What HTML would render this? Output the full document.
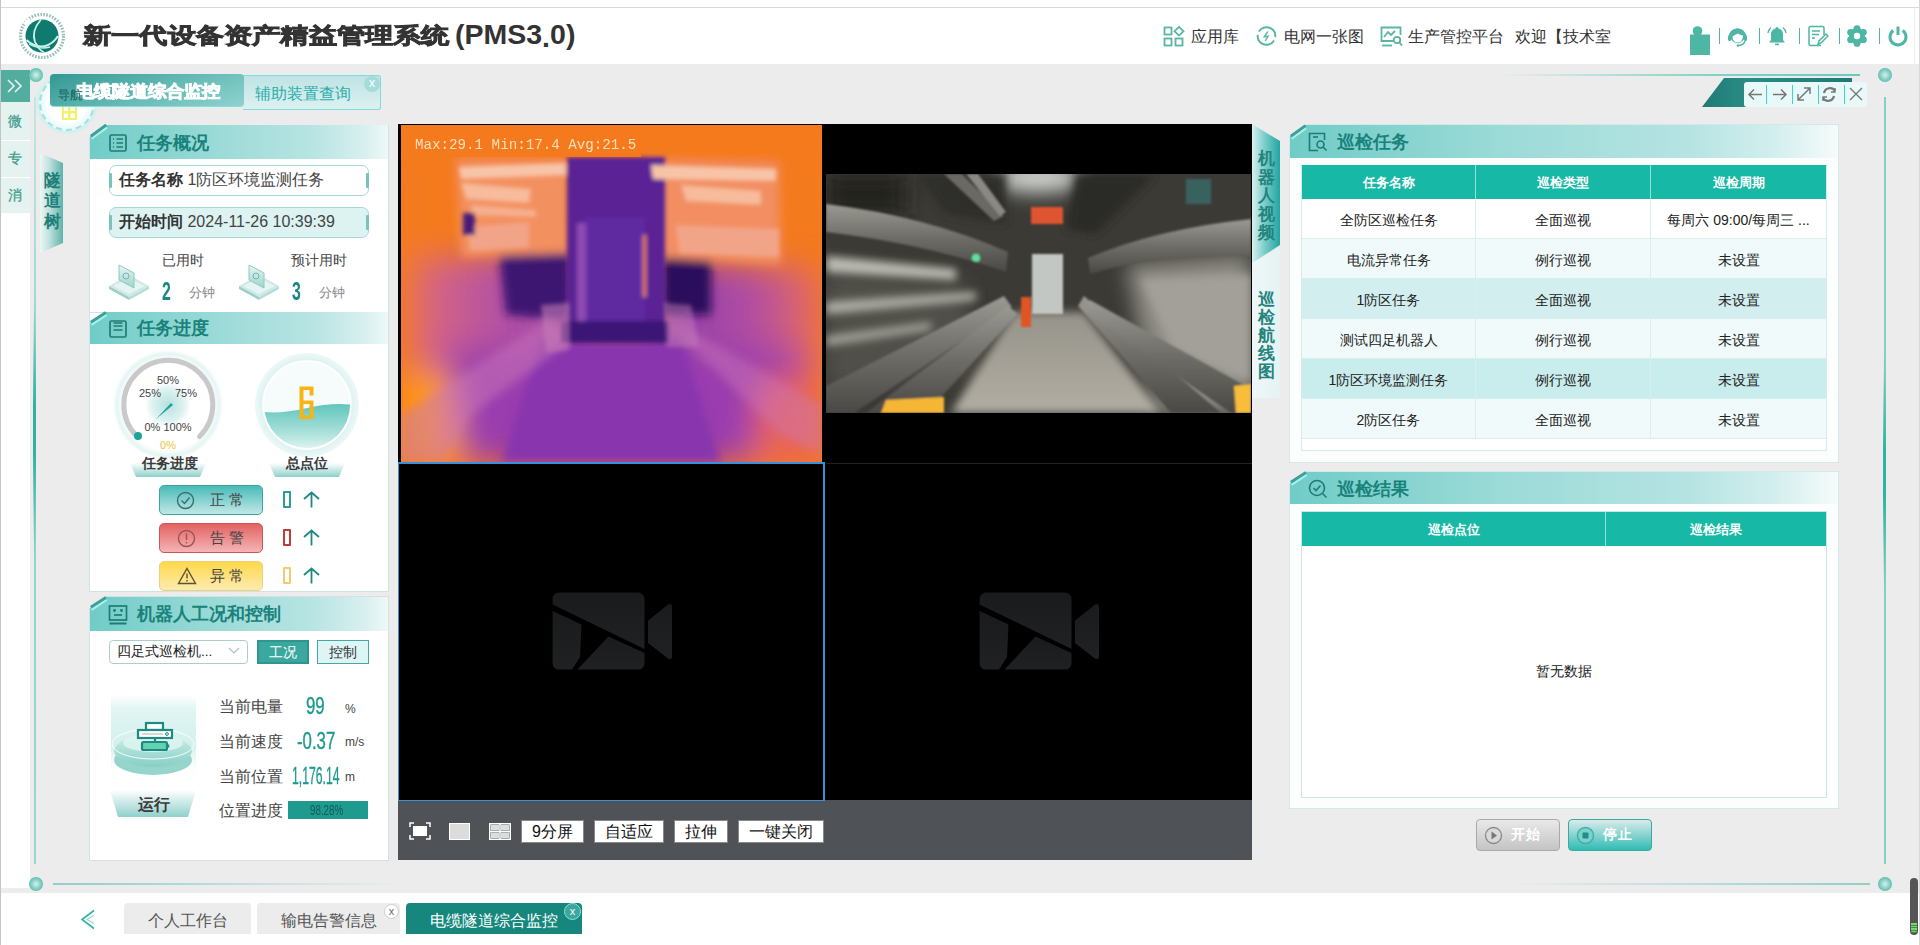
<!DOCTYPE html>
<html><head><meta charset="utf-8">
<style>
*{box-sizing:border-box;margin:0;padding:0}
html,body{width:1920px;height:945px;overflow:hidden;background:#fff;font-family:"Liberation Sans",sans-serif;color:#333}
.a{position:absolute}
.nw{white-space:nowrap}
#main{left:0;top:64px;width:1920px;height:829px;background:#ececec}
.title{left:83px;top:16px;font-size:28px;font-weight:900;color:#333;letter-spacing:0.2px;white-space:nowrap;-webkit-text-stroke:1.1px #333}
.nav{top:27px;font-size:16px;line-height:20px;color:#333;white-space:nowrap}
.sep{top:28px;width:1px;height:16px;background:#4db6a4}
.ph{height:33px;background:linear-gradient(90deg,#70ccc7 0%,#9ddbd8 45%,#b8e4e3 75%,#d8efef 92%,#eef8f8 100%);clip-path:polygon(15px 0,100% 0,100% 100%,0 100%,0 11px)}
.phl{width:20px;height:3px;background:#3d9f97;transform:rotate(-37deg);transform-origin:0 0}
.pht{font-size:18px;font-weight:bold;color:#18827b;line-height:20px;white-space:nowrap}
.cond{font-family:"Liberation Sans Narrow","Liberation Sans",sans-serif;transform:scaleX(0.62);transform-origin:0 0;display:inline-block}
.sbtn{height:30px;width:104px;border-radius:5px;font-size:14px;line-height:28px;color:#444;letter-spacing:6px}
.vid{background:#000}
.vtab{color:#1f7f79;font-size:17px;font-weight:bold;line-height:18.5px;width:20px;text-align:center}
</style></head><body>
<div class="a" id="main"></div>
<div class="a" style="left:0;top:7px;width:1920px;height:1px;background:#d9d9d9"></div>
<div class="a" style="left:1914px;top:8px;width:1px;height:56px;background:#f0f0f0"></div><div class="a" style="left:1919px;top:0;width:1px;height:945px;background:#d8d8d8"></div>
<div class="a" style="left:0;top:0;width:1px;height:945px;background:#c4c4c4"></div>

<!-- ===== HEADER ===== -->
<svg class="a" style="left:17px;top:11px" width="50" height="50" viewBox="0 0 50 50">
 <circle cx="25" cy="25" r="21.5" fill="none" stroke="#3c8a80" stroke-width="3.2" stroke-dasharray="1.6 1.4" opacity="0.55"/>
 <path d="M8 14 A21.5 21.5 0 0 1 13 8" stroke="#fff" stroke-width="4" fill="none"/>
 <circle cx="25" cy="25" r="16.5" fill="#0f7a6e"/>
 <path d="M24 8.5 Q14 20 18 31 Q21 38 27 41.5" stroke="#c8f3ec" stroke-width="1.8" fill="none"/>
 <path d="M9.5 29 Q18 37 28 35 Q36 33 41 25" stroke="#c8f3ec" stroke-width="2" fill="none"/>
 <path d="M12 33 Q22 39 33 36" stroke="#c8f3ec" stroke-width="1.3" fill="none"/>
 <path d="M19 32 L21 35" stroke="#c8f3ec" stroke-width="1.2"/>
</svg>
<div class="a title" style="top:17px;transform:scaleY(0.78);transform-origin:0 50%">新一代设备资产精益管理系统</div>
<div class="a nw" style="left:455px;top:17px;font-size:28.5px;line-height:34px;font-weight:bold;color:#333">(PMS3<span style="position:relative;top:3px">.</span>0)</div>

<svg class="a" style="left:1163px;top:26px" width="22" height="22" viewBox="0 0 22 22" fill="none" stroke="#5bb5a3" stroke-width="1.8">
 <rect x="1.5" y="1.5" width="7" height="7"/><rect x="1.5" y="12.5" width="7" height="7"/><rect x="12.5" y="12.5" width="7" height="7"/><path d="M16 0.8 L20.5 5.2 L16 9.6 L11.5 5.2 Z"/>
</svg>
<div class="a nav" style="left:1191px">应用库</div>
<svg class="a" style="left:1256px;top:26px" width="21" height="21" viewBox="0 0 21 21" fill="none" stroke="#5bb5a3" stroke-width="1.9">
 <circle cx="10.5" cy="10" r="8.8" stroke-dasharray="24 3.6" transform="rotate(-150 10.5 10)"/><path d="M11.8 5.5 L8.3 10.8 L12.2 10.2 L9.2 15" stroke-width="1.4"/>
</svg>
<div class="a nav" style="left:1284px">电网一张图</div>
<svg class="a" style="left:1380px;top:26px" width="24" height="22" viewBox="0 0 24 22" fill="none" stroke="#5bb5a3" stroke-width="1.8">
 <path d="M13 15 H1.5 V1.5 H20.5 V9"/><path d="M4 11 L8 6 L11 9 L15 5"/><circle cx="17" cy="14" r="3.2"/><path d="M19.3 16.3 L22 19.5"/><path d="M2 19.5 H12"/>
</svg>
<div class="a nav" style="left:1408px">生产管控平台</div>
<div class="a nav" style="left:1515px">欢迎【技术室</div>

<svg class="a" style="left:1688px;top:25px" width="24" height="32" viewBox="0 0 24 32">
 <rect x="2" y="9.5" width="20" height="20.5" fill="#4db6a4"/><circle cx="9.5" cy="6" r="4.8" fill="#4db6a4"/>
</svg>
<div class="a sep" style="left:1719px"></div>
<svg class="a" style="left:1727px;top:25px" width="21" height="22" viewBox="0 0 21 22">
 <path d="M2.5 12 A8 8 0 0 1 18.5 12" fill="none" stroke="#4db6a4" stroke-width="1.6"/>
 <circle cx="10.5" cy="11" r="7.2" fill="#4db6a4"/>
 <path d="M5.5 11.5 Q8 9.5 11 8.5 Q13.5 10.5 16 10.5 Q16 17 10.5 17.5 Q5.5 17 5.5 11.5Z" fill="#fff"/>
 <rect x="1" y="10" width="3.2" height="6" rx="1.5" fill="#4db6a4"/><rect x="16.8" y="10" width="3.2" height="6" rx="1.5" fill="#4db6a4"/>
 <path d="M18 16 Q17 20 12 20.5" fill="none" stroke="#4db6a4" stroke-width="1.3"/><circle cx="11" cy="20.5" r="1.3" fill="#4db6a4"/>
</svg>
<div class="a sep" style="left:1759px"></div>
<svg class="a" style="left:1766px;top:25px" width="22" height="22" viewBox="0 0 22 22" fill="#4db6a4">
 <path d="M11 2 A1.5 1.5 0 0 1 12.5 3.5 A6 6 0 0 1 17 9.5 V15 L19 17.5 H3 L5 15 V9.5 A6 6 0 0 1 9.5 3.5 A1.5 1.5 0 0 1 11 2Z"/><rect x="9" y="18.5" width="4" height="1.8" rx="0.9"/>
 <path d="M2 8 Q2.5 4.5 5 2.5" stroke="#4db6a4" stroke-width="1.3" fill="none"/><path d="M20 8 Q19.5 4.5 17 2.5" stroke="#4db6a4" stroke-width="1.3" fill="none"/>
</svg>
<div class="a sep" style="left:1799px"></div>
<svg class="a" style="left:1807px;top:25px" width="22" height="22" viewBox="0 0 22 22" fill="none" stroke="#4db6a4" stroke-width="1.5">
 <path d="M14 20.5 H3.5 A1.5 1.5 0 0 1 2 19 V3 A1.5 1.5 0 0 1 3.5 1.5 H15.5 A1.5 1.5 0 0 1 17 3 V10"/><path d="M5 6 H13 M5 9.5 H12 M5 13 H8"/><path d="M11 19.5 L12 16 L19 9 L21 11 L14 18 Z"/>
</svg>
<div class="a sep" style="left:1839px"></div>
<svg class="a" style="left:1846px;top:25px" width="22" height="22" viewBox="0 0 22 22">
 <g fill="#4db6a4"><circle cx="11" cy="11" r="8"/>
 <circle cx="11" cy="3.6" r="3.4"/><circle cx="11" cy="18.4" r="3.4"/><circle cx="4.6" cy="7.3" r="3.4"/><circle cx="17.4" cy="7.3" r="3.4"/><circle cx="4.6" cy="14.7" r="3.4"/><circle cx="17.4" cy="14.7" r="3.4"/></g>
 <circle cx="11" cy="11" r="3.2" fill="#fff"/>
</svg>
<div class="a sep" style="left:1879px"></div>
<svg class="a" style="left:1887px;top:25px" width="22" height="22" viewBox="0 0 22 22" fill="none" stroke="#4db6a4" stroke-width="3">
 <path d="M6.3 5.5 A8 8 0 1 0 15.7 5.5"/><path d="M11 1.5 V10"/>
</svg>

<!-- ===== LEFT SIDEBAR ===== -->
<div class="a" style="left:1px;top:213px;width:29px;height:675px;background:#fff"></div>
<div class="a" style="left:1px;top:70px;width:29px;height:32px;background:#51ad9d"></div>
<svg class="a" style="left:7px;top:79px" width="17" height="14" viewBox="0 0 17 14" fill="none" stroke="#e8f6f3" stroke-width="1.6"><path d="M1 1 L7 7 L1 13 M8 1 L14 7 L8 13"/></svg>
<div class="a" style="left:1px;top:102px;width:29px;height:111px;background:#e4f2f0"></div>
<div class="a" style="left:1px;top:140px;width:29px;height:1px;background:#fff"></div>
<div class="a" style="left:1px;top:177px;width:29px;height:1px;background:#fff"></div>
<div class="a nw" style="left:8px;top:113px;font-size:14px;color:#3f9d8c;-webkit-text-stroke:0.3px #3f9d8c">微</div>
<div class="a nw" style="left:8px;top:150px;font-size:14px;color:#3f9d8c;-webkit-text-stroke:0.3px #3f9d8c">专</div>
<div class="a nw" style="left:8px;top:187px;font-size:14px;color:#3f9d8c;-webkit-text-stroke:0.3px #3f9d8c">消</div>

<!-- frame lines -->
<div class="a" style="left:34px;top:97px;width:1.5px;height:767px;background:linear-gradient(180deg,#c5e6e1,#8fd3c9 40%,#9ad6cd)"></div><div class="a" style="left:33px;top:300px;width:3px;height:260px;border-radius:50%;background:linear-gradient(180deg,rgba(47,179,160,0),#2fb3a0 40%,#2fb3a0 60%,rgba(47,179,160,0))"></div>
<div class="a" style="left:1884px;top:97px;width:1.5px;height:767px;background:#86d0c5"></div><div class="a" style="left:1883px;top:350px;width:3px;height:245px;border-radius:50%;background:linear-gradient(180deg,rgba(47,179,160,0),#2fb3a0 40%,#2fb3a0 60%,rgba(47,179,160,0))"></div>
<div class="a" style="left:53px;top:883px;width:350px;height:2px;background:linear-gradient(90deg,#8fcfc6,rgba(190,220,216,0))"></div><div class="a" style="left:1510px;top:883px;width:360px;height:2px;background:linear-gradient(90deg,rgba(190,220,216,0),#8fcfc6)"></div>
<div class="a" style="left:1500px;top:74px;width:360px;height:2px;background:linear-gradient(90deg,rgba(111,201,189,0),#7fd2c4 60%,#6cc9bd)"></div>
<div class="a" style="left:29px;top:68px;width:14px;height:14px;border-radius:50%;background:radial-gradient(circle at 50% 50%,#d6f0ec,#5fbfb1 70%)"></div>
<div class="a" style="left:29px;top:877px;width:14px;height:14px;border-radius:50%;background:radial-gradient(circle at 50% 50%,#d6f0ec,#5fbfb1 70%)"></div>
<div class="a" style="left:1878px;top:68px;width:14px;height:14px;border-radius:50%;background:radial-gradient(circle at 50% 50%,#d6f0ec,#5fbfb1 70%)"></div>
<div class="a" style="left:1878px;top:877px;width:14px;height:14px;border-radius:50%;background:radial-gradient(circle at 50% 50%,#d6f0ec,#5fbfb1 70%)"></div>

<!-- nav circle -->
<div class="a" style="left:39px;top:75px;width:56px;height:56px;border-radius:50%;border:2px dashed #9fe0df;box-shadow:0 0 3px 2px #c8f2f1;background:radial-gradient(circle,#fff 50%,#e0f6f6 80%)"></div>
<div class="a" style="left:62px;top:104px;width:15px;height:16px;border:2.5px solid #f3f06a;background:linear-gradient(#f3f06a,#f3f06a) center/2.5px 100% no-repeat,linear-gradient(#f3f06a,#f3f06a) center/100% 2.5px no-repeat"></div>

<!-- top tabs -->
<div class="a" style="left:243px;top:75px;width:138px;height:35px;background:linear-gradient(180deg,#bfe3e3,#dcf1f1);border:1.5px solid #7fdcd7;border-left:none;border-radius:0 3px 3px 0"></div>
<div class="a nw" style="left:255px;top:84px;font-size:16px;color:#2aaeaa">辅助装置查询</div>
<div class="a" style="left:364px;top:76px;width:16px;height:16px;border-radius:50%;background:#a5dcda;color:#fff;font-size:12px;line-height:15px;text-align:center">x</div>
<div class="a" style="left:50px;top:74px;width:194px;height:33px;border-radius:4px;background:linear-gradient(160deg,#2f9590 0%,#5db7b2 50%,#8dd1cd 100%);border-bottom:1px solid #7fe0dc;opacity:0.97"></div>
<div class="a nw" style="left:76px;top:79px;font-size:18px;font-weight:bold;color:#fff;-webkit-text-stroke:0.9px #fff;transform:scaleY(0.92)">电缆隧道综合监控</div>

<div class="a nw" style="left:58px;top:87px;font-size:12px;font-weight:bold;color:#1f6a66;opacity:0.85">导航</div>
<!-- 隧道树 -->
<div class="a" style="left:40px;top:153px;width:23px;height:100px;background:linear-gradient(90deg,#eef7f6,#bfe2de 40%,#5fb2a8);clip-path:polygon(0 0,100% 10px,100% 90px,0 100%)"></div>
<div class="a vtab" style="left:42px;top:171px;font-size:17px;line-height:20.3px;color:#1d7f78">隧<br>道<br>树</div>

<!-- ===== LEFT PANEL ===== -->
<div class="a" style="left:89px;top:125px;width:300px;height:187px;background:#fff;border:1px solid #cfe3e2;border-bottom:none;clip-path:polygon(16px 0,100% 0,100% 100%,0 100%,0 12px)"></div>
<div class="a" style="left:89px;top:312px;width:300px;height:280px;background:#fff;border:1px solid #cfe3e2"></div>
<div class="a" style="left:89px;top:596px;width:300px;height:265px;background:#fff;border:1px solid #cfe3e2;clip-path:polygon(16px 0,100% 0,100% 100%,0 100%,0 12px)"></div>

<!-- section 1 -->
<div class="a ph" style="left:90px;top:125px;width:298px;height:34px"></div>
<div class="a" style="left:90px;top:135px;width:19px;height:3px;background:#3d9f97;transform:rotate(-36deg);transform-origin:0 0"></div><div class="a" style="left:91px;top:138px;width:19px;height:1.5px;background:#a8f2ee;transform:rotate(-36deg);transform-origin:0 0"></div>
<svg class="a" style="left:109px;top:134px" width="18" height="18" viewBox="0 0 18 18" fill="none" stroke="#1f7b75" stroke-width="1.7"><rect x="1" y="1" width="16" height="16" rx="1.5"/><path d="M4 5 H5 M7.5 5 H14 M4 9 H5 M7.5 9 H14 M4 13 H5 M7.5 13 H14"/></svg>
<div class="a pht" style="left:137px;top:133px">任务概况</div>

<div class="a" style="left:109px;top:165px;width:260px;height:31px;border:1px solid #a7d8d3;border-radius:7px;background:#fff"></div>
<div class="a" style="left:109px;top:173px;width:3px;height:15px;background:#79c3bc;border-radius:1px"></div>
<div class="a" style="left:366px;top:173px;width:3px;height:15px;background:#79c3bc;border-radius:1px"></div>
<div class="a nw" style="left:119px;top:170px;font-size:16px;line-height:20px;color:#333"><b>任务名称</b> <span style="color:#444">1防区环境监测任务</span></div>

<div class="a" style="left:109px;top:207px;width:260px;height:31px;border:1px solid #a7d8d3;border-radius:7px;background:#dcf3f2"></div>
<div class="a" style="left:109px;top:215px;width:3px;height:15px;background:#79c3bc;border-radius:1px"></div>
<div class="a" style="left:366px;top:215px;width:3px;height:15px;background:#79c3bc;border-radius:1px"></div>
<div class="a nw" style="left:119px;top:212px;font-size:16px;line-height:20px;color:#333"><b>开始时间</b> <span style="color:#444">2024-11-26 10:39:39</span></div>

<svg class="a" style="left:108px;top:260px" width="44" height="40" viewBox="0 0 44 40">
 <defs><linearGradient id="ig" x1="0" y1="0" x2="0" y2="1"><stop offset="0" stop-color="#e8f6f5"/><stop offset="1" stop-color="#9fd3cc"/></linearGradient></defs>
 <path d="M1 26 L21 15 L41 26 L21 37 Z" fill="#cfe9e6"/><path d="M1 26 V29 L21 40 V37 Z" fill="#9ccfc8"/><path d="M41 26 V29 L21 40 V37 Z" fill="#b6ddd8"/>
 <path d="M5 26 L21 18 L37 26 L21 34 Z" fill="#e6f5f3"/>
 <path d="M11 5 L26 13 V28 L11 20 Z" fill="url(#ig)" stroke="#8ccac2" stroke-width="1"/><circle cx="18" cy="16" r="3" fill="none" stroke="#6fb8b0" stroke-width="1"/>
</svg>
<div class="a nw" style="left:162px;top:252px;font-size:14px;color:#444">已用时</div>
<div class="a nw" style="left:162px;top:279px;font-size:25.5px;line-height:24px;font-weight:bold;color:#1a8a80"><span class="cond" style="transform:scaleX(0.62)">2</span></div>
<div class="a nw" style="left:189px;top:285px;font-size:12.5px;color:#888">分钟</div>
<svg class="a" style="left:238px;top:260px" width="44" height="40" viewBox="0 0 44 40">
 <path d="M1 26 L21 15 L41 26 L21 37 Z" fill="#cfe9e6"/><path d="M1 26 V29 L21 40 V37 Z" fill="#9ccfc8"/><path d="M41 26 V29 L21 40 V37 Z" fill="#b6ddd8"/>
 <path d="M5 26 L21 18 L37 26 L21 34 Z" fill="#e6f5f3"/>
 <path d="M11 5 L26 13 V28 L11 20 Z" fill="url(#ig)" stroke="#8ccac2" stroke-width="1"/><circle cx="18" cy="16" r="3" fill="none" stroke="#6fb8b0" stroke-width="1"/>
</svg>
<div class="a nw" style="left:291px;top:252px;font-size:14px;color:#444">预计用时</div>
<div class="a nw" style="left:292px;top:279px;font-size:25.5px;line-height:24px;font-weight:bold;color:#1a8a80"><span class="cond" style="transform:scaleX(0.62)">3</span></div>
<div class="a nw" style="left:319px;top:285px;font-size:12.5px;color:#888">分钟</div>

<!-- section 2 -->
<div class="a ph" style="left:90px;top:312px;width:298px;height:32px"></div>
<div class="a" style="left:90px;top:321px;width:18px;height:3px;background:#3d9f97;transform:rotate(-33deg);transform-origin:0 0"></div><div class="a" style="left:91px;top:324px;width:18px;height:1.5px;background:#a8f2ee;transform:rotate(-33deg);transform-origin:0 0"></div>
<svg class="a" style="left:109px;top:320px" width="18" height="18" viewBox="0 0 18 18" fill="none" stroke="#1f7b75" stroke-width="1.7"><rect x="1" y="1" width="16" height="16" rx="1.5"/><path d="M4.5 6 H13.5 M4.5 10 H13.5 M4.5 3 H13.5"/></svg>
<div class="a pht" style="left:137px;top:318px">任务进度</div>

<!-- gauge 1 -->
<svg class="a" style="left:108px;top:345px" width="120" height="135" viewBox="0 0 120 135">
 <defs>
  <radialGradient id="gl" cx="0.5" cy="0.5" r="0.5"><stop offset="0.8" stop-color="#fff"/><stop offset="0.92" stop-color="#e4f5f4"/><stop offset="1" stop-color="#f5fbfb" stop-opacity="0"/></radialGradient>
  <radialGradient id="gi" cx="0.5" cy="0.5" r="0.5"><stop offset="0" stop-color="#b5e2df"/><stop offset="0.7" stop-color="#def2f1"/><stop offset="1" stop-color="#fff"/></radialGradient>
  <linearGradient id="tz" x1="0" y1="0" x2="0" y2="1"><stop offset="0" stop-color="#fff"/><stop offset="1" stop-color="#8fd0cb"/></linearGradient>
 </defs>
 <circle cx="60" cy="60" r="56" fill="url(#gl)"/>
 <circle cx="60" cy="60" r="23" fill="url(#gi)"/>
 <path d="M29.2 91.6 A44.5 44.5 0 1 1 91.5 91.5" fill="none" stroke="#c9c9c9" stroke-width="5" stroke-linecap="round"/>
 <circle cx="30" cy="91" r="4" fill="#1ea39a"/>
 <path d="M48 74 L63 58 L65 60 Z" fill="#1ea39a"/>
 <g font-size="11" fill="#444" text-anchor="middle" font-family="Liberation Sans,sans-serif">
  <text x="60" y="39">50%</text><text x="42" y="52">25%</text><text x="78" y="52">75%</text><text x="60" y="86">0% 100%</text>
  <text x="60" y="104" fill="#f5c23a">0%</text>
 </g>
 <path d="M22 118 H98 L92 132 H28 Z" fill="url(#tz)"/>
</svg>
<div class="a nw" style="left:142px;top:455px;font-size:14px;font-weight:bold;color:#3a3a3a">任务进度</div>

<!-- gauge 2 -->
<svg class="a" style="left:247px;top:345px" width="120" height="135" viewBox="0 0 120 135">
 <defs>
  <linearGradient id="wv" x1="0" y1="0" x2="0" y2="1"><stop offset="0" stop-color="#5fc6bc"/><stop offset="0.55" stop-color="#a9e0da"/><stop offset="1" stop-color="#f2fbfa"/></linearGradient>
  <radialGradient id="g2" cx="0.5" cy="0.5" r="0.5"><stop offset="0.75" stop-color="#f4fbfb"/><stop offset="0.88" stop-color="#dff3f2"/><stop offset="1" stop-color="#eef8f8"/></radialGradient>
 </defs>
 <circle cx="60" cy="60" r="52" fill="url(#g2)"/>
 <circle cx="60" cy="60" r="44" fill="#f6fcfc" stroke="#fff" stroke-width="1.5"/>
 <clipPath id="cc"><circle cx="60" cy="60" r="43"/></clipPath>
 <path clip-path="url(#cc)" d="M10 66 Q30 70 60 63 T112 61 V110 H10 Z" fill="url(#wv)"/>
 <path fill="#f6b514" fill-rule="evenodd" d="M52.5 41.5 H66.5 V50.5 H62.5 V45 H56.5 V55.5 H66.5 V74 H52.5 Z M56.5 59 V70.5 H62.5 V59 Z"/>
 <path d="M22 118 H98 L92 132 H28 Z" fill="url(#tz)"/>
</svg>
<div class="a nw" style="left:286px;top:455px;font-size:14px;font-weight:bold;color:#3a3a3a">总点位</div>

<!-- status buttons -->
<div class="a sbtn" style="left:159px;top:485px;background:linear-gradient(180deg,#48bbb8,#c2e8e6);border:1px solid #3aa6a2"></div>
<svg class="a" style="left:176px;top:491px" width="19" height="19" viewBox="0 0 19 19" fill="none" stroke="#3a6f6c" stroke-width="1.4"><circle cx="9.5" cy="9.5" r="8"/><path d="M5.5 9.5 L8.5 12.5 L13.5 6.5"/></svg>
<div class="a nw" style="left:210px;top:491px;font-size:15px;color:#444;letter-spacing:4px">正常</div>
<div class="a sbtn" style="left:159px;top:523px;background:linear-gradient(180deg,#e46262,#f4b5b5);border:1px solid #cf5454"></div>
<svg class="a" style="left:177px;top:529px" width="19" height="19" viewBox="0 0 19 19" fill="none" stroke="#9b5454" stroke-width="1.4"><circle cx="9.5" cy="9.5" r="8"/><path d="M9.5 4.5 V11 M9.5 13 V14.5"/></svg>
<div class="a nw" style="left:210px;top:529px;font-size:15px;color:#444;letter-spacing:4px">告警</div>
<div class="a sbtn" style="left:159px;top:561px;background:linear-gradient(180deg,#ffd84a,#fdebb0);border:1px solid #f1d07c"></div>
<svg class="a" style="left:177px;top:567px" width="20" height="18" viewBox="0 0 20 18" fill="none" stroke="#5c5330" stroke-width="1.4"><path d="M10 1.5 L18.5 16.5 H1.5 Z"/><path d="M10 6.5 V11.5 M10 13 V14.5"/></svg>
<div class="a nw" style="left:210px;top:567px;font-size:15px;color:#444;letter-spacing:4px">异常</div>
<div class="a" style="left:283px;top:491px;width:8px;height:17px;border:2px solid #2a9d96;border-radius:1px"></div>
<div class="a" style="left:283px;top:529px;width:8px;height:17px;border:2px solid #c43a3a;border-radius:1px"></div>
<div class="a" style="left:283px;top:567px;width:8px;height:17px;border:2px solid #f2cc6a;border-radius:1px"></div>
<svg class="a" style="left:303px;top:491px" width="17" height="17" viewBox="0 0 17 17" fill="none" stroke="#1d8a82" stroke-width="1.8"><path d="M1 8 L8.5 1.5 L16 8 M8.5 1.5 V16.5"/></svg>
<svg class="a" style="left:303px;top:529px" width="17" height="17" viewBox="0 0 17 17" fill="none" stroke="#1d8a82" stroke-width="1.8"><path d="M1 8 L8.5 1.5 L16 8 M8.5 1.5 V16.5"/></svg>
<svg class="a" style="left:303px;top:567px" width="17" height="17" viewBox="0 0 17 17" fill="none" stroke="#1d8a82" stroke-width="1.8"><path d="M1 8 L8.5 1.5 L16 8 M8.5 1.5 V16.5"/></svg>

<!-- section 3 -->
<div class="a ph" style="left:90px;top:597px;width:298px;height:34px"></div>
<div class="a" style="left:90px;top:606px;width:18px;height:3px;background:#3d9f97;transform:rotate(-33deg);transform-origin:0 0"></div><div class="a" style="left:91px;top:609px;width:18px;height:1.5px;background:#a8f2ee;transform:rotate(-33deg);transform-origin:0 0"></div>
<svg class="a" style="left:108px;top:605px" width="20" height="20" viewBox="0 0 20 20" fill="none" stroke="#1f7b75" stroke-width="1.7"><rect x="1.5" y="1" width="17" height="14"/><path d="M1.5 18.5 H18.5" stroke-width="2"/><circle cx="6.5" cy="5.5" r="0.6" fill="#1f7b75"/><circle cx="13.5" cy="5.5" r="0.6" fill="#1f7b75"/><path d="M6 10 H14"/></svg>
<div class="a pht" style="left:137px;top:604px">机器人工况和控制</div>

<div class="a" style="left:109px;top:640px;width:139px;height:24px;border:1px solid #a9cfcd;border-radius:4px;background:#fff"></div>
<div class="a nw" style="left:117px;top:643px;font-size:13.5px;line-height:17px;color:#222">四足式巡检机...</div>
<svg class="a" style="left:228px;top:647px" width="12" height="8" viewBox="0 0 12 8" fill="none" stroke="#9cc9c6" stroke-width="1.2"><path d="M1 1 L6 6 L11 1"/></svg>
<div class="a" style="left:257px;top:640px;width:52px;height:24px;background:#3aa89f;border:2px solid #2e968e;color:#fff;font-size:14px;line-height:20px;text-align:center">工况</div>
<div class="a" style="left:317px;top:640px;width:52px;height:24px;background:#def5f5;border:1px solid #47a8a2;color:#333;font-size:14px;line-height:22px;text-align:center">控制</div>

<svg class="a" style="left:108px;top:693px" width="92" height="98" viewBox="0 0 92 98">
 <defs>
  <linearGradient id="rb" x1="0" y1="0" x2="0" y2="1"><stop offset="0" stop-color="#fff"/><stop offset="0.15" stop-color="#e3f6f4"/><stop offset="0.6" stop-color="#d2f0ec"/><stop offset="1" stop-color="#fff" stop-opacity="0"/></linearGradient>
  <linearGradient id="rd" x1="0" y1="0" x2="0" y2="1"><stop offset="0" stop-color="#cdeee9"/><stop offset="1" stop-color="#86cfc4"/></linearGradient>
 </defs>
 <rect x="3" y="2" width="85" height="85" fill="url(#rb)"/>
 <ellipse cx="45" cy="73" rx="41" ry="14" fill="#fff" opacity="0.8"/>
 <ellipse cx="45" cy="67" rx="39" ry="15" fill="#96d5cb"/>
 <ellipse cx="45" cy="58" rx="39" ry="16" fill="url(#rd)"/>
 <ellipse cx="45" cy="51" rx="41" ry="15" fill="none" stroke="#fff" stroke-width="1" opacity="0.9"/>
 <ellipse cx="45" cy="50" rx="30" ry="9" fill="#e2f6f3" opacity="0.8"/>
 <g stroke="#1e8a80" stroke-width="2.2"><rect x="38" y="30" width="17" height="7" fill="#fff"/><rect x="30" y="37" width="34" height="8" fill="#fff"/><path d="M47 45 V49"/><rect x="34" y="49" width="25" height="8" rx="1.5" fill="#62d3b2"/><path d="M60 51.5 V54.5" stroke-width="2.6"/></g>
 <path d="M34 41 H55" stroke="#9bbab6" stroke-width="1"/><circle cx="59" cy="41" r="1.4" fill="none" stroke="#1e8a80" stroke-width="1"/>
</svg>
<svg class="a" style="left:110px;top:786px" width="86" height="32" viewBox="0 0 86 32">
 <defs><linearGradient id="tz2" x1="0" y1="0" x2="0" y2="1"><stop offset="0" stop-color="#fff"/><stop offset="1" stop-color="#8fd0cb"/></linearGradient></defs>
 <path d="M0 4 H86 L78 31 H8 Z" fill="url(#tz2)"/>
</svg>
<div class="a nw" style="left:138px;top:795px;font-size:16px;font-weight:bold;color:#3a3a3a">运行</div>

<div class="a nw" style="left:219px;top:697px;font-size:15.8px;line-height:19px;color:#444">当前电量</div>
<div class="a nw" style="left:306px;top:695px;font-size:24px;line-height:22px;color:#1f9a8f;-webkit-text-stroke:0.4px #1f9a8f"><span class="cond" style="transform:scaleX(0.7)">99</span></div>
<div class="a nw" style="left:345px;top:702px;font-size:12px;color:#444">%</div>
<div class="a nw" style="left:219px;top:732px;font-size:15.8px;line-height:19px;color:#444">当前速度</div>
<div class="a nw" style="left:297px;top:730px;font-size:24px;line-height:22px;color:#1f9a8f;-webkit-text-stroke:0.4px #1f9a8f"><span class="cond" style="transform:scaleX(0.7)">-0.37</span></div>
<div class="a nw" style="left:345px;top:735px;font-size:12px;color:#444">m/s</div>
<div class="a nw" style="left:219px;top:767px;font-size:15.8px;line-height:19px;color:#444">当前位置</div>
<div class="a nw" style="left:292px;top:765px;font-size:23.5px;line-height:22px;color:#1f9a8f;-webkit-text-stroke:0.4px #1f9a8f"><span class="cond" style="transform:scaleX(0.52)">1,176.14</span></div>
<div class="a nw" style="left:345px;top:770px;font-size:12px;color:#444">m</div>
<div class="a nw" style="left:219px;top:801px;font-size:15.8px;line-height:19px;color:#444">位置进度</div>
<div class="a" style="left:288px;top:801px;width:80px;height:18px;background:#1e9a8e"></div>
<div class="a nw" style="left:310px;top:801px;font-size:14px;line-height:18px;color:#0f5f57"><span class="cond" style="transform:scaleX(0.7)">98.28%</span></div>

<!-- ===== VIDEO GRID ===== -->
<div class="a vid" style="left:398px;top:124px;width:854px;height:676px"></div>
<div class="a" style="left:398px;top:800px;width:854px;height:60px;background:#4f5257"></div>
<!-- thermal -->
<div class="a" id="thermal" style="left:401px;top:125px;width:421px;height:337px;overflow:hidden;background:#f57a1a"><svg width="421" height="337" viewBox="0 0 421 337" style="position:absolute;left:0;top:0">
 <defs>
  <filter id="b6" x="-20%" y="-20%" width="140%" height="140%"><feGaussianBlur stdDeviation="5"/></filter>
  <filter id="b3" x="-20%" y="-20%" width="140%" height="140%"><feGaussianBlur stdDeviation="2"/></filter>
  <filter id="b12" x="-30%" y="-30%" width="160%" height="160%"><feGaussianBlur stdDeviation="16"/></filter>
  <linearGradient id="lw" x1="0" y1="0" x2="1" y2="0"><stop offset="0" stop-color="#ee7436"/><stop offset="0.18" stop-color="#d46484"/><stop offset="0.55" stop-color="#b452a2"/><stop offset="1" stop-color="#9a40a8"/></linearGradient>
  <linearGradient id="rw" x1="0" y1="0" x2="1" y2="0"><stop offset="0" stop-color="#8a3aac"/><stop offset="0.6" stop-color="#b24ea2"/><stop offset="1" stop-color="#ec6e54"/></linearGradient>
 </defs>
 <rect width="421" height="337" fill="#f47a1e"/>
 <g filter="url(#b12)">
  <path d="M0 135 L170 128 L175 230 L0 250Z" fill="url(#lw)"/>
  <path d="M255 135 L421 145 L421 250 L255 230Z" fill="url(#rw)"/>
  <path d="M40 225 L400 225 L421 337 L40 337Z" fill="#9a3eae"/>
  <path d="M0 250 L50 245 L60 337 L0 337Z" fill="#ff9812"/>
  <path d="M360 250 L421 255 L421 337 L350 337Z" fill="#e8645a"/>
  <rect x="0" y="40" width="12" height="210" fill="#f47a1e"/>
 </g>
 <g filter="url(#b6)">
  <path d="M140 215 L280 215 L320 337 L100 337Z" fill="#8834ae"/>
  <path d="M145 195 L170 215 L70 290 L40 337 L0 337 L0 290Z" fill="#cc78b8" opacity="0.5"/>
  <path d="M262 195 L290 205 L421 280 L421 330 L380 310Z" fill="#cc78b8" opacity="0.45"/>
  <path d="M98 130 L170 125 L170 195 L105 190Z" fill="#3c1272"/>
  <path d="M260 40 L310 50 L310 190 L262 190Z" fill="#2c0a5c"/>
  <path d="M55 35 L168 35 L170 128 L60 132Z" fill="#f3905e"/>
  <path d="M245 35 L378 38 L380 140 L250 132Z" fill="#f28e62"/>
  <path d="M0 0 L421 0 L421 35 L0 35Z" fill="#f47a1e"/>
 </g>
 <g filter="url(#b3)">
  <rect x="166" y="32" width="98" height="185" fill="#5a2494"/>
  <rect x="184" y="92" width="60" height="108" fill="#5e2ca0"/>
  <rect x="160" y="196" width="108" height="22" fill="#3a1276"/>
  <path d="M58 42 L165 38 L165 50 L60 54Z" fill="#f8c4a8"/>
  <path d="M60 58 L130 64 L128 78 L65 74Z" fill="#f7bc9c"/>
  <path d="M70 80 L135 85 L135 92 L72 90Z" fill="#f6b090"/>
  <path d="M65 102 L128 97 L128 122 L70 126Z" fill="#f2a488"/>
  <path d="M250 40 L375 44 L375 56 L252 54Z" fill="#f8c4a8"/>
  <path d="M280 60 L360 66 L360 80 L285 76Z" fill="#f7bc9c"/>
  <path d="M275 100 L378 104 L378 132 L278 128Z" fill="#f2a488"/>
  <rect x="62" y="88" width="12" height="22" fill="#4a1a78"/>
  <rect x="176" y="98" width="9" height="98" fill="#8e4cb4"/>
  <rect x="242" y="110" width="3" height="62" fill="#f0824a"/>
  <path d="M140 180 L168 178 L168 225 L145 228Z" fill="#c47ab8" opacity="0.6"/>
  <path d="M264 178 L290 180 L298 222 L266 222Z" fill="#c47ab8" opacity="0.5"/>
 </g>
 <rect x="12" y="5" width="228" height="27" fill="#f47a1e" opacity="0.9"/>
 <text x="14" y="23.5" font-family="Liberation Mono,monospace" font-size="14.2" fill="#ffe4c4" opacity="0.95">Max:29.1 Min:17.4 Avg:21.5</text>
</svg>
</div>
<!-- camera -->
<div class="a" id="cam" style="left:826px;top:174px;width:425px;height:239px;overflow:hidden;background:#3a3935"><svg width="425" height="239" viewBox="0 0 425 239" style="position:absolute;left:0;top:0">
 <defs>
  <filter id="c4" x="-20%" y="-20%" width="140%" height="140%"><feGaussianBlur stdDeviation="4"/></filter>
  <filter id="c2" x="-20%" y="-20%" width="140%" height="140%"><feGaussianBlur stdDeviation="1.2"/></filter>
  <filter id="c10" x="-30%" y="-30%" width="160%" height="160%"><feGaussianBlur stdDeviation="10"/></filter>
  <linearGradient id="flr" x1="0" y1="0" x2="0" y2="1"><stop offset="0" stop-color="#96938a"/><stop offset="1" stop-color="#b2aea4"/></linearGradient>
  <linearGradient id="pp" x1="0" y1="0" x2="0" y2="1"><stop offset="0" stop-color="#9a9992"/><stop offset="0.5" stop-color="#6e6d68"/><stop offset="1" stop-color="#4a4945"/></linearGradient>
 </defs>
 <rect width="425" height="239" fill="#3b3a35"/>
 <g filter="url(#c10)">
  <ellipse cx="212" cy="4" rx="45" ry="14" fill="#d8dcd8"/>
  <path d="M300 90 L425 80 L425 239 L330 239Z" fill="#8e8c84"/>
  <rect x="0" y="0" width="80" height="40" fill="#22211d"/>
  <path d="M0 95 L140 110 L150 200 L0 215Z" fill="#514f49"/>
 </g>
 <g filter="url(#c4)">
  <path d="M188 138 L258 138 L335 239 L125 239Z" fill="url(#flr)"/>
  <path d="M315 105 L425 100 L425 210 L345 175Z" fill="#a2a098"/>
  <path d="M0 82 L130 95 L130 106 L0 98Z" fill="#bcbcb4"/>
  <path d="M0 128 L150 118 L150 126 L0 140Z" fill="#b0b0a8"/>
  <path d="M0 162 L105 148 L105 156 L0 172Z" fill="#a2a29a"/>
  <path d="M250 0 L330 0 L270 60 L240 55Z" fill="#2a2925"/>
  <path d="M90 0 L180 0 L180 50 L120 40Z" fill="#2e2d29"/>
 </g>
 <g filter="url(#c2)">
  <path d="M0 30 Q100 42 182 78 L180 98 Q100 70 0 58Z" fill="url(#pp)"/>
  <path d="M118 0 L136 0 L178 42 L168 47Z" fill="#6a6964"/>
  <path d="M140 0 L152 0 L180 38 L174 42Z" fill="#8a8984"/>
  <path d="M425 45 Q330 55 262 84 L264 100 Q330 80 425 82Z" fill="url(#pp)"/>
  <path d="M0 212 L178 122 L186 133 L28 239 L0 239Z" fill="url(#pp)"/>
  <path d="M40 239 L182 132 L192 140 L100 239Z" fill="url(#pp)"/>
  <path d="M258 122 L395 239 L345 239 L252 132Z" fill="url(#pp)"/>
  <path d="M264 126 L425 215 L425 239 L405 239 L256 136Z" fill="url(#pp)"/>
  <rect x="206" y="80" width="31" height="60" fill="#c3c7c4"/>
  <rect x="205" y="33" width="32" height="17" fill="#df5530"/>
  <rect x="195" y="123" width="10" height="30" fill="#e05424"/>
  <path d="M60 226 L118 223 L118 239 L55 239Z" fill="#f5b635"/>
  <path d="M408 212 L425 210 L425 239 L410 239Z" fill="#f7bd3a"/>
  <circle cx="150" cy="84" r="4" fill="#5fe0a0"/>
  <rect x="360" y="5" width="25" height="25" fill="#3a8a8a" opacity="0.5"/>
 </g>
</svg>
</div>
<div class="a" style="left:826px;top:463px;width:426px;height:1px;background:#222"></div>
<div class="a" style="left:398px;top:462px;width:427px;height:339px;border:1px solid #3b8fd8;border-right-width:2px;border-top-width:2px"></div>
<!-- placeholders -->
<svg class="a" style="left:551px;top:592px" width="122" height="80" viewBox="0 0 122 80">
 <defs><linearGradient id="pg" x1="0" y1="0" x2="0" y2="1"><stop offset="0" stop-color="#1a1b1d"/><stop offset="1" stop-color="#202123"/></linearGradient></defs>
 <path d="M8 0.6 H87 A6.5 6.5 0 0 1 93.5 7 V57 L1.6 12.4 V7 A6.5 6.5 0 0 1 8 0.6Z" fill="url(#pg)"/>
 <path d="M1.6 19 L30.5 32.5 L29 65 L21 77.6 H8 A6.5 6.5 0 0 1 1.6 71Z" fill="url(#pg)"/>
 <path d="M57.5 44.5 L93.5 61 V71 A6.5 6.5 0 0 1 87 77.6 H26.5Z" fill="url(#pg)"/>
 <path d="M97 28.7 L117 12.5 Q121 10.5 121 15 V64 Q121 68.5 117 66.5 L97 51Z" fill="url(#pg)"/>
</svg>
<svg class="a" style="left:978px;top:592px" width="122" height="80" viewBox="0 0 122 80">
 <path d="M8 0.6 H87 A6.5 6.5 0 0 1 93.5 7 V57 L1.6 12.4 V7 A6.5 6.5 0 0 1 8 0.6Z" fill="url(#pg)"/>
 <path d="M1.6 19 L30.5 32.5 L29 65 L21 77.6 H8 A6.5 6.5 0 0 1 1.6 71Z" fill="url(#pg)"/>
 <path d="M57.5 44.5 L93.5 61 V71 A6.5 6.5 0 0 1 87 77.6 H26.5Z" fill="url(#pg)"/>
 <path d="M97 28.7 L117 12.5 Q121 10.5 121 15 V64 Q121 68.5 117 66.5 L97 51Z" fill="url(#pg)"/>
</svg>
<!-- toolbar -->
<svg class="a" style="left:409px;top:822px" width="22" height="18" viewBox="0 0 22 18"><path d="M1 5 V1 H5 M17 1 H21 V5 M21 13 V17 H17 M5 17 H1 V13" stroke="#fff" stroke-width="1.5" fill="none"/><rect x="4" y="4" width="14" height="10" fill="#fff"/></svg>
<div class="a" style="left:449px;top:823px;width:21px;height:17px;background:#dcdcdc;border:1.5px solid #fff"></div>
<svg class="a" style="left:489px;top:823px" width="22" height="17" viewBox="0 0 22 17"><rect x="0.75" y="0.75" width="20.5" height="15.5" fill="#4f5257" stroke="#fff" stroke-width="1.5"/><path d="M11 1 V16 M1 8.5 H21" stroke="#fff" stroke-width="1.5"/><rect x="2" y="2" width="8" height="5.5" fill="#ddd"/><rect x="12" y="2" width="8" height="5.5" fill="#ddd"/><rect x="2" y="9.5" width="8" height="5.5" fill="#ddd"/><rect x="12" y="9.5" width="8" height="5.5" fill="#ddd"/></svg>
<div class="a" style="left:521px;top:820px;width:63px;height:23px;background:#fff;border:1px solid #888;font-size:16px;line-height:21px;text-align:center;color:#111">9分屏</div>
<div class="a" style="left:594px;top:820px;width:70px;height:23px;background:#fff;border:1px solid #888;font-size:16px;line-height:21px;text-align:center;color:#111">自适应</div>
<div class="a" style="left:674px;top:820px;width:54px;height:23px;background:#fff;border:1px solid #888;font-size:16px;line-height:21px;text-align:center;color:#111">拉伸</div>
<div class="a" style="left:738px;top:820px;width:86px;height:23px;background:#fff;border:1px solid #888;font-size:16px;line-height:21px;text-align:center;color:#111">一键关闭</div>

<!-- vertical tabs right of video -->
<div class="a" style="left:1252px;top:124px;width:28px;height:139px;background:linear-gradient(90deg,#d7f1f0,#7ccdca 45%,#21a6a2);clip-path:polygon(0 0,100% 17px,100% 121px,0 100%)"></div>
<div class="a vtab" style="left:1256px;top:150px;font-weight:bold;color:#23837d">机<br>器<br>人<br>视<br>频</div>
<div class="a" style="left:1252px;top:248px;width:28px;height:150px;background:linear-gradient(90deg,#eef7f7,#e6f3f3);clip-path:polygon(0 15px,100% 0,100% 100%,0 100%)"></div>
<div class="a vtab" style="left:1256px;top:291px;line-height:18px;color:#23837d">巡<br>检<br>航<br>线<br>图</div>

<!-- ===== RIGHT PANELS ===== -->
<div class="a" style="left:1289px;top:124px;width:550px;height:339px;background:#fcfefe;border:1px solid #d3e8e7;clip-path:polygon(16px 0,100% 0,100% 100%,0 100%,0 12px)"></div>
<div class="a ph" style="left:1290px;top:125px;width:548px;height:33px;background:linear-gradient(90deg,#70ccc7 0%,#9ddbd8 40%,#b4e3e2 72%,#d2eeee 88%,#f6fbfb 100%)"></div>
<div class="a" style="left:1290px;top:135px;width:18px;height:3px;background:#3d9f97;transform:rotate(-36deg);transform-origin:0 0"></div><div class="a" style="left:1291px;top:138px;width:18px;height:1.5px;background:#a8f2ee;transform:rotate(-36deg);transform-origin:0 0"></div>
<svg class="a" style="left:1308px;top:132px" width="20" height="20" viewBox="0 0 20 20" fill="none" stroke="#1f7b75" stroke-width="1.6"><path d="M10 18.5 H1.5 V1.5 H16.5 V8"/><circle cx="12.5" cy="12.5" r="3.5"/><path d="M15 15 L18.5 18.5"/><path d="M5 5 H10"/></svg>
<div class="a pht" style="left:1337px;top:132px">巡检任务</div>

<div class="a" style="left:1301px;top:165px;width:526px;height:286px;border:1px solid #d6eaea;background:#fff"></div>
<div class="a" style="left:1302px;top:165px;width:524px;height:34px;background:#18b8a6"></div>
<div class="a" style="left:1475px;top:165px;width:1px;height:34px;background:#8fe3da"></div>
<div class="a" style="left:1650px;top:165px;width:1px;height:34px;background:#8fe3da"></div>
<div class="a nw" style="left:1302px;top:174px;width:174px;text-align:center;font-size:13px;font-weight:bold;color:#fff">任务名称</div>
<div class="a nw" style="left:1476px;top:174px;width:174px;text-align:center;font-size:13px;font-weight:bold;color:#fff">巡检类型</div>
<div class="a nw" style="left:1651px;top:174px;width:175px;text-align:center;font-size:13px;font-weight:bold;color:#fff">巡检周期</div>
<div class="a" style="left:1302px;top:199px;width:524px;height:40px;background:#ffffff;border-bottom:1px solid #d9eeee"></div>
<div class="a" style="left:1475px;top:199px;width:1px;height:40px;background:#d9eeee"></div><div class="a" style="left:1650px;top:199px;width:1px;height:40px;background:#d9eeee"></div>
<div class="a nw" style="left:1302px;top:211px;width:173px;text-align:center;font-size:14px;line-height:18px;color:#222">全防区巡检任务</div>
<div class="a nw" style="left:1476px;top:211px;width:174px;text-align:center;font-size:14px;line-height:18px;color:#222">全面巡视</div>
<div class="a nw" style="left:1651px;top:211px;width:175px;text-align:center;font-size:14px;line-height:18px;color:#222">每周六 09:00/每周三 ...</div>
<div class="a" style="left:1302px;top:239px;width:524px;height:40px;background:#f1fafa;border-bottom:1px solid #d9eeee"></div>
<div class="a" style="left:1475px;top:239px;width:1px;height:40px;background:#d9eeee"></div><div class="a" style="left:1650px;top:239px;width:1px;height:40px;background:#d9eeee"></div>
<div class="a nw" style="left:1302px;top:251px;width:173px;text-align:center;font-size:14px;line-height:18px;color:#222">电流异常任务</div>
<div class="a nw" style="left:1476px;top:251px;width:174px;text-align:center;font-size:14px;line-height:18px;color:#222">例行巡视</div>
<div class="a nw" style="left:1651px;top:251px;width:175px;text-align:center;font-size:14px;line-height:18px;color:#222">未设置</div>
<div class="a" style="left:1302px;top:279px;width:524px;height:40px;background:#d2eeee;border-bottom:1px solid #d9eeee"></div>
<div class="a" style="left:1475px;top:279px;width:1px;height:40px;background:#d9eeee"></div><div class="a" style="left:1650px;top:279px;width:1px;height:40px;background:#d9eeee"></div>
<div class="a nw" style="left:1302px;top:291px;width:173px;text-align:center;font-size:14px;line-height:18px;color:#222">1防区任务</div>
<div class="a nw" style="left:1476px;top:291px;width:174px;text-align:center;font-size:14px;line-height:18px;color:#222">全面巡视</div>
<div class="a nw" style="left:1651px;top:291px;width:175px;text-align:center;font-size:14px;line-height:18px;color:#222">未设置</div>
<div class="a" style="left:1302px;top:319px;width:524px;height:40px;background:#f1fafa;border-bottom:1px solid #d9eeee"></div>
<div class="a" style="left:1475px;top:319px;width:1px;height:40px;background:#d9eeee"></div><div class="a" style="left:1650px;top:319px;width:1px;height:40px;background:#d9eeee"></div>
<div class="a nw" style="left:1302px;top:331px;width:173px;text-align:center;font-size:14px;line-height:18px;color:#222">测试四足机器人</div>
<div class="a nw" style="left:1476px;top:331px;width:174px;text-align:center;font-size:14px;line-height:18px;color:#222">例行巡视</div>
<div class="a nw" style="left:1651px;top:331px;width:175px;text-align:center;font-size:14px;line-height:18px;color:#222">未设置</div>
<div class="a" style="left:1302px;top:359px;width:524px;height:40px;background:#c9ecec;border-bottom:1px solid #d9eeee"></div>
<div class="a" style="left:1475px;top:359px;width:1px;height:40px;background:#d9eeee"></div><div class="a" style="left:1650px;top:359px;width:1px;height:40px;background:#d9eeee"></div>
<div class="a nw" style="left:1302px;top:371px;width:173px;text-align:center;font-size:14px;line-height:18px;color:#222">1防区环境监测任务</div>
<div class="a nw" style="left:1476px;top:371px;width:174px;text-align:center;font-size:14px;line-height:18px;color:#222">例行巡视</div>
<div class="a nw" style="left:1651px;top:371px;width:175px;text-align:center;font-size:14px;line-height:18px;color:#222">未设置</div>
<div class="a" style="left:1302px;top:399px;width:524px;height:40px;background:#f1fafa;border-bottom:1px solid #d9eeee"></div>
<div class="a" style="left:1475px;top:399px;width:1px;height:40px;background:#d9eeee"></div><div class="a" style="left:1650px;top:399px;width:1px;height:40px;background:#d9eeee"></div>
<div class="a nw" style="left:1302px;top:411px;width:173px;text-align:center;font-size:14px;line-height:18px;color:#222">2防区任务</div>
<div class="a nw" style="left:1476px;top:411px;width:174px;text-align:center;font-size:14px;line-height:18px;color:#222">全面巡视</div>
<div class="a nw" style="left:1651px;top:411px;width:175px;text-align:center;font-size:14px;line-height:18px;color:#222">未设置</div>


<div class="a" style="left:1289px;top:471px;width:550px;height:338px;background:#fcfefe;border:1px solid #d3e8e7;clip-path:polygon(16px 0,100% 0,100% 100%,0 100%,0 12px)"></div>
<div class="a ph" style="left:1290px;top:472px;width:548px;height:32px;background:linear-gradient(90deg,#70ccc7 0%,#9ddbd8 40%,#b4e3e2 72%,#d2eeee 88%,#f6fbfb 100%)"></div>
<div class="a" style="left:1290px;top:481px;width:18px;height:3px;background:#3d9f97;transform:rotate(-33deg);transform-origin:0 0"></div><div class="a" style="left:1291px;top:484px;width:18px;height:1.5px;background:#a8f2ee;transform:rotate(-33deg);transform-origin:0 0"></div>
<svg class="a" style="left:1308px;top:479px" width="20" height="20" viewBox="0 0 20 20" fill="none" stroke="#1f7b75" stroke-width="1.6"><circle cx="9" cy="9" r="7.5"/><path d="M5.5 9 L8 11.5 L12.5 6.5"/><path d="M14.5 14.5 L18.5 18.5"/></svg>
<div class="a pht" style="left:1337px;top:479px">巡检结果</div>
<div class="a" style="left:1301px;top:511px;width:526px;height:287px;border:1px solid #cfe6e6;background:#fff"></div>
<div class="a" style="left:1302px;top:512px;width:524px;height:34px;background:#18b8a6"></div>
<div class="a" style="left:1605px;top:512px;width:1px;height:34px;background:#8fe3da"></div>
<div class="a nw" style="left:1302px;top:521px;width:303px;text-align:center;font-size:13px;font-weight:bold;color:#fff">巡检点位</div>
<div class="a nw" style="left:1606px;top:521px;width:220px;text-align:center;font-size:13px;font-weight:bold;color:#fff">巡检结果</div>
<div class="a nw" style="left:1536px;top:663px;font-size:14px;color:#222">暂无数据</div>

<div class="a" style="left:1476px;top:819px;width:84px;height:32px;border-radius:4px;background:linear-gradient(180deg,#e9e9e9,#c4c4c4);border:1px solid #a9a9a9"></div>
<svg class="a" style="left:1484px;top:826px" width="19" height="19" viewBox="0 0 19 19"><circle cx="9.5" cy="9.5" r="8" fill="#d9d9d9" stroke="#888" stroke-width="1.3"/><path d="M7.5 5.5 L13 9.5 L7.5 13.5Z" fill="#777"/></svg>
<div class="a nw" style="left:1511px;top:826px;font-size:14px;font-weight:bold;color:#fff;letter-spacing:1px">开始</div>
<div class="a" style="left:1568px;top:819px;width:84px;height:32px;border-radius:4px;background:linear-gradient(180deg,#d9ebeb,#8fd6d2 45%,#2fbcb2);border:1px solid #3aa8a3"></div>
<svg class="a" style="left:1576px;top:826px" width="19" height="19" viewBox="0 0 19 19"><circle cx="9.5" cy="9.5" r="8" fill="#7fcfcb" stroke="#3fb0aa" stroke-width="1.5"/><rect x="6.5" y="6.5" width="6" height="6" rx="1" fill="#1f8f89"/></svg>
<div class="a nw" style="left:1603px;top:826px;font-size:14px;font-weight:bold;color:#fff;letter-spacing:1px">停止</div>

<!-- top right toolbar -->
<div class="a" style="left:1702px;top:78px;width:150px;height:29px;background:linear-gradient(90deg,#1f7a75,#2a8c86 30%,#1f7a75);clip-path:polygon(22px 0,100% 0,100% 100%,0 100%)"></div>
<div class="a" style="left:1744px;top:82px;width:123px;height:25px;background:#e9f8f8;border-radius:3px"></div>
<div class="a" style="left:1766px;top:85px;width:1px;height:19px;background:#36d8d6"></div>
<div class="a" style="left:1792px;top:85px;width:1px;height:19px;background:#36d8d6"></div>
<div class="a" style="left:1818px;top:85px;width:1px;height:19px;background:#36d8d6"></div>
<div class="a" style="left:1844px;top:85px;width:1px;height:19px;background:#36d8d6"></div>
<svg class="a" style="left:1746px;top:86px" width="120" height="17" viewBox="0 0 120 17" fill="none" stroke="#777" stroke-width="1.5">
 <path d="M3 8.5 H16 M8 3.5 L3 8.5 L8 13.5"/>
 <path d="M27 8.5 H40 M35 3.5 L40 8.5 L35 13.5"/>
 <path d="M52 14 L64 2 M58 2 H64 V8 M52 8 V14 H58"/>
 <path d="M89 5 A6 6 0 0 0 78 7 M77 12 A6 6 0 0 0 88 10" stroke-width="2.2"/><path d="M89 2 V6 H85 M77 15 V11 H81" stroke-width="1.4"/>
 <path d="M104 2 L116 14 M116 2 L104 14" stroke-width="1.4"/>
</svg>

<!-- ===== BOTTOM TABS ===== -->
<svg class="a" style="left:80px;top:909px" width="16" height="21" viewBox="0 0 16 21" fill="none"><path d="M14 1.5 L2 10.5 L14 19.5" stroke="#2fb3a9" stroke-width="1.6"/><path d="M14 6.5 L7 10.5 L14 14.5" stroke="#9ad6d0" stroke-width="1.2"/></svg>
<div class="a" style="left:124px;top:903px;width:127px;height:31px;background:#ececec;border-radius:4px 4px 0 0"></div>
<div class="a nw" style="left:148px;top:911px;font-size:16px;color:#555">个人工作台</div>
<div class="a" style="left:257px;top:903px;width:143px;height:31px;background:#ececec;border-radius:4px 4px 0 0"></div>
<div class="a nw" style="left:281px;top:911px;font-size:16px;color:#555">输电告警信息</div>
<div class="a" style="left:384px;top:904px;width:15px;height:15px;border-radius:50%;background:#fff;border:1px solid #ccc;font-size:11px;line-height:12px;text-align:center;color:#666">x</div>
<div class="a" style="left:406px;top:903px;width:176px;height:31px;background:#17877d;border-radius:4px 4px 0 0"></div>
<div class="a nw" style="left:430px;top:911px;font-size:16px;color:#fff">电缆隧道综合监控</div>
<div class="a" style="left:564px;top:903px;width:17px;height:17px;border-radius:50%;background:#3aa89f;border:1px solid #8fe0da;font-size:11px;line-height:14px;text-align:center;color:#fff">x</div>

<!-- scrollbar -->
<div class="a" style="left:1910px;top:878px;width:8px;height:57px;border-radius:4px;background:#555"></div>
<div class="a" style="left:1911px;top:923px;width:6px;height:10px;border-radius:0 0 3px 3px;background:repeating-linear-gradient(180deg,#7ad27a 0 1.5px,#3f8f3f 1.5px 2.5px)"></div>

</body></html>
